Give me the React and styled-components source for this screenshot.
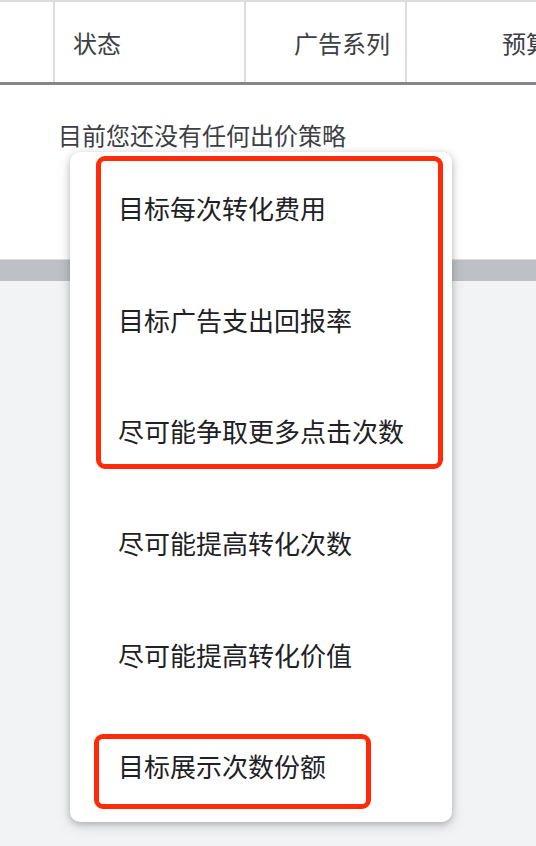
import React from 'react';
import styled, { createGlobalStyle } from 'styled-components';

const GlobalStyle = createGlobalStyle`
  html, body {
    margin: 0;
    padding: 0;
    background: #f1f3f4;
    font-family: "Noto Sans CJK SC", "Noto Sans", sans-serif;
  }
`;

const Page = styled.div`
  position: relative;
  width: 536px;
  height: 846px;
  overflow: hidden;
  background: #f1f3f4;
`;

const Header = styled.div`
  display: grid;
  grid-template-columns: 55px 191px 161px 1fr;
  height: 80px;
  background: #fff;
  border-top: 2px solid #dadce0;
  border-bottom: 3px solid #80868b;
`;

const HeadCell = styled.div`
  display: flex;
  align-items: center;
  justify-content: ${p => (p.$right ? 'flex-end' : 'flex-start')};
  padding: ${p => p.$pad || '0'};
  border-right: ${p => (p.$last ? 'none' : '2px solid #dadce0')};
  font-size: 24px;
  color: #3c4043;
  white-space: nowrap;
  overflow: hidden;
`;

const EmptyRow = styled.div`
  height: 174px;
  background: #fff;
  padding: 35px 0 0 58px;
  box-sizing: border-box;
  font-size: 24px;
  color: #3c4043;
  line-height: 30px;
`;

const Band = styled.div`
  height: 21px;
  background: #bdc1c6;
  border-top: 1px solid #dadce0;
`;

const Menu = styled.ul`
  position: absolute;
  left: 70px;
  top: 152px;
  width: 382px;
  margin: 0;
  padding: 0;
  list-style: none;
  background: #fff;
  border-radius: 10px;
  box-shadow: 0 2px 6px rgba(60, 64, 67, 0.3), 0 4px 14px rgba(60, 64, 67, 0.15);
`;

const Item = styled.li`
  height: 111.6px;
  display: flex;
  align-items: center;
  padding-left: 48px;
  font-size: 26px;
  color: #202124;
  white-space: nowrap;
`;

const Mark = styled.div`
  position: absolute;
  left: ${p => p.$x}px;
  top: ${p => p.$y}px;
  width: ${p => p.$w}px;
  height: ${p => p.$h}px;
  box-sizing: border-box;
  border: 5px solid #ff2a08;
  border-radius: 9px;
  pointer-events: none;
`;

const options = [
  '目标每次转化费用',
  '目标广告支出回报率',
  '尽可能争取更多点击次数',
  '尽可能提高转化次数',
  '尽可能提高转化价值',
  '目标展示次数份额',
];

export default function App() {
  return (
    <Page>
      <GlobalStyle />
      <Header>
        <HeadCell />
        <HeadCell $pad="0 0 0 18px">状态</HeadCell>
        <HeadCell $right $pad="0 15px 0 0">广告系列</HeadCell>
        <HeadCell $last $pad="0 0 0 95px">预算</HeadCell>
      </Header>
      <EmptyRow>目前您还没有任何出价策略</EmptyRow>
      <Band />
      <Menu>
        {options.map(o => (
          <Item key={o}>{o}</Item>
        ))}
      </Menu>
      <Mark $x={96} $y={156} $w={347} $h={313} />
      <Mark $x={94} $y={734} $w={277} $h={75} />
    </Page>
  );
}
